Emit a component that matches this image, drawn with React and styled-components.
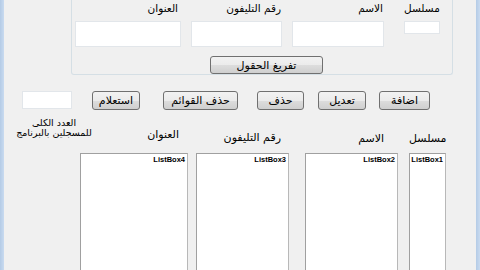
import React from 'react';
import styled, { createGlobalStyle } from 'styled-components';

const GlobalStyle = createGlobalStyle`
  html, body {
    margin: 0;
    padding: 0;
    background: #f0f0f0;
  }
  * { box-sizing: border-box; }
`;

const Window = styled.div`
  width: 480px;
  height: 270px;
  overflow: hidden;
  display: flex;
  background: #f0f0f0;
  font-family: "DejaVu Sans", Tahoma, sans-serif;
  font-size: 10.5px;
  color: #000;
`;

const Edge = styled.div`
  flex: none;
  width: ${p => p.$w}px;
  background: linear-gradient(90deg, #b4cbe6, #c9dbf0);
`;

const Content = styled.div`
  flex: 1;
  display: flex;
  flex-direction: column;
  position: relative;
`;

const GroupBox = styled.div`
  margin-left: 67px;
  width: 382px;
  height: 81px;
  border: 1px solid #d5dfe5;
  border-top: none;
  border-radius: 0 0 3px 3px;
  display: flex;
  flex-direction: column;
  padding-left: 3px;
`;

const FieldRow = styled.div`
  display: flex;
  align-items: flex-start;
`;

const Field = styled.div`
  flex: none;
  display: flex;
  flex-direction: column;
  width: ${p => p.$w}px;
  margin-left: ${p => p.$ml || 0}px;
`;

const Label = styled.div`
  height: 14px;
  line-height: 14px;
  margin-top: 1px;
  text-align: right;
  white-space: nowrap;
  padding-right: ${p => p.$pr || 0}px;
`;

const TextBox = styled.div`
  background: #fff;
  border: 1px solid #e2e6ea;
  height: ${p => p.$h}px;
  margin-top: ${p => p.$mt || 0}px;
  width: ${p => (p.$w ? `${p.$w}px` : 'auto')};
  flex: none;
`;

const Button = styled.button`
  flex: none;
  font-family: "DejaVu Sans", Tahoma, sans-serif;
  font-size: 11px;
  width: ${p => p.$w}px;
  height: ${p => p.$h || 19}px;
  margin-left: ${p => p.$ml || 0}px;
  padding: 0;
  border: 1px solid #707070;
  border-radius: 3px;
  background: linear-gradient(#f2f2f2 0%, #ebebeb 50%, #dddddd 51%, #cfcfcf 100%);
  color: #000;
  line-height: 1;
`;

const ClearRow = styled.div`
  display: flex;
  margin-top: 9px;
  padding-left: 135px;
`;

const ActionRow = styled.div`
  display: flex;
  align-items: flex-start;
  margin-top: 16px;
  padding-left: 18px;
`;

const ListsRow = styled.div`
  display: flex;
  align-items: flex-start;
  margin-top: 4px;
`;

const CountCell = styled.div`
  flex: none;
  width: 76px;
`;

const CountText = styled.div`
  width: 100px;
  text-align: center;
  font-size: 9.5px;
  line-height: 10px;
  white-space: nowrap;
  padding-top: 4px;
`;

const ListColumn = styled.div`
  flex: none;
  width: ${p => p.$w}px;
  margin-left: ${p => p.$ml || 0}px;
  display: flex;
  flex-direction: column;
`;

const Heading = styled.div`
  height: 14px;
  line-height: 14px;
  margin-top: ${p => p.$mt}px;
  text-align: right;
  white-space: nowrap;
  padding-right: ${p => p.$pr}px;
  font-size: 11px;
`;

const ListBox = styled.div`
  margin-top: ${p => p.$mt}px;
  height: 130px;
  background: #fff;
  border: 1px solid #a0a0a0;
  border-right-color: #b8b8b8;
  text-align: right;
  padding: 1px 2px 0 0;
  font-family: "Liberation Sans", Arial, sans-serif;
  font-weight: bold;
  font-size: 7.5px;
  line-height: 9px;
`;

const fields = [
  { label: 'العنوان', w: 106, h: 26, pr: 3 },
  { label: 'رقم التليفون', w: 91, h: 26, ml: 10, pr: 1 },
  { label: 'الاسم', w: 92, h: 26, ml: 10, pr: 1 },
  { label: 'مسلسل', w: 36, h: 13, ml: 20, pr: 2 },
];

const buttons = [
  { text: 'استعلام', w: 48, ml: 20 },
  { text: 'حذف القوائم', w: 75, ml: 23 },
  { text: 'حذف', w: 47, ml: 19 },
  { text: 'تعديل', w: 48, ml: 14 },
  { text: 'اضافة', w: 51, ml: 13 },
];

const lists = [
  { heading: 'العنوان', name: 'ListBox4', w: 108, ml: 0, pr: 9, mt: 14 },
  { heading: 'رقم التليفون', name: 'ListBox3', w: 93, ml: 8, pr: 8, mt: 17 },
  { heading: 'الاسم', name: 'ListBox2', w: 93, ml: 16, pr: 14, mt: 18 },
  { heading: 'مسلسل', name: 'ListBox1', w: 37, ml: 11, pr: 4, mt: 18 },
];

export default function App() {
  return (
    <>
      <GlobalStyle />
      <Window>
        <Edge $w={4} />
        <Content>
          <GroupBox>
            <FieldRow>
              {fields.map(f => (
                <Field key={f.label} $w={f.w} $ml={f.ml}>
                  <Label $pr={f.pr}>{f.label}</Label>
                  <TextBox $h={f.h} $mt={6} />
                </Field>
              ))}
            </FieldRow>
            <ClearRow>
              <Button $w={113} $h={18}>تفريغ الحقول</Button>
            </ClearRow>
          </GroupBox>

          <ActionRow>
            <TextBox $h={18} $w={50} />
            {buttons.map(b => (
              <Button key={b.text} $w={b.w} $ml={b.ml}>{b.text}</Button>
            ))}
          </ActionRow>

          <ListsRow>
            <CountCell>
              <CountText>
                العدد الكلى
                <br />
                للمسجلين بالبرنامج
              </CountText>
            </CountCell>
            {lists.map(l => (
              <ListColumn key={l.name} $w={l.w} $ml={l.ml}>
                <Heading $pr={l.pr} $mt={l.mt}>{l.heading}</Heading>
                <ListBox $mt={159 - 120 - 4 - l.mt - 14 + 4}>{l.name}</ListBox>
              </ListColumn>
            ))}
          </ListsRow>
        </Content>
        <Edge $w={4} />
      </Window>
    </>
  );
}
